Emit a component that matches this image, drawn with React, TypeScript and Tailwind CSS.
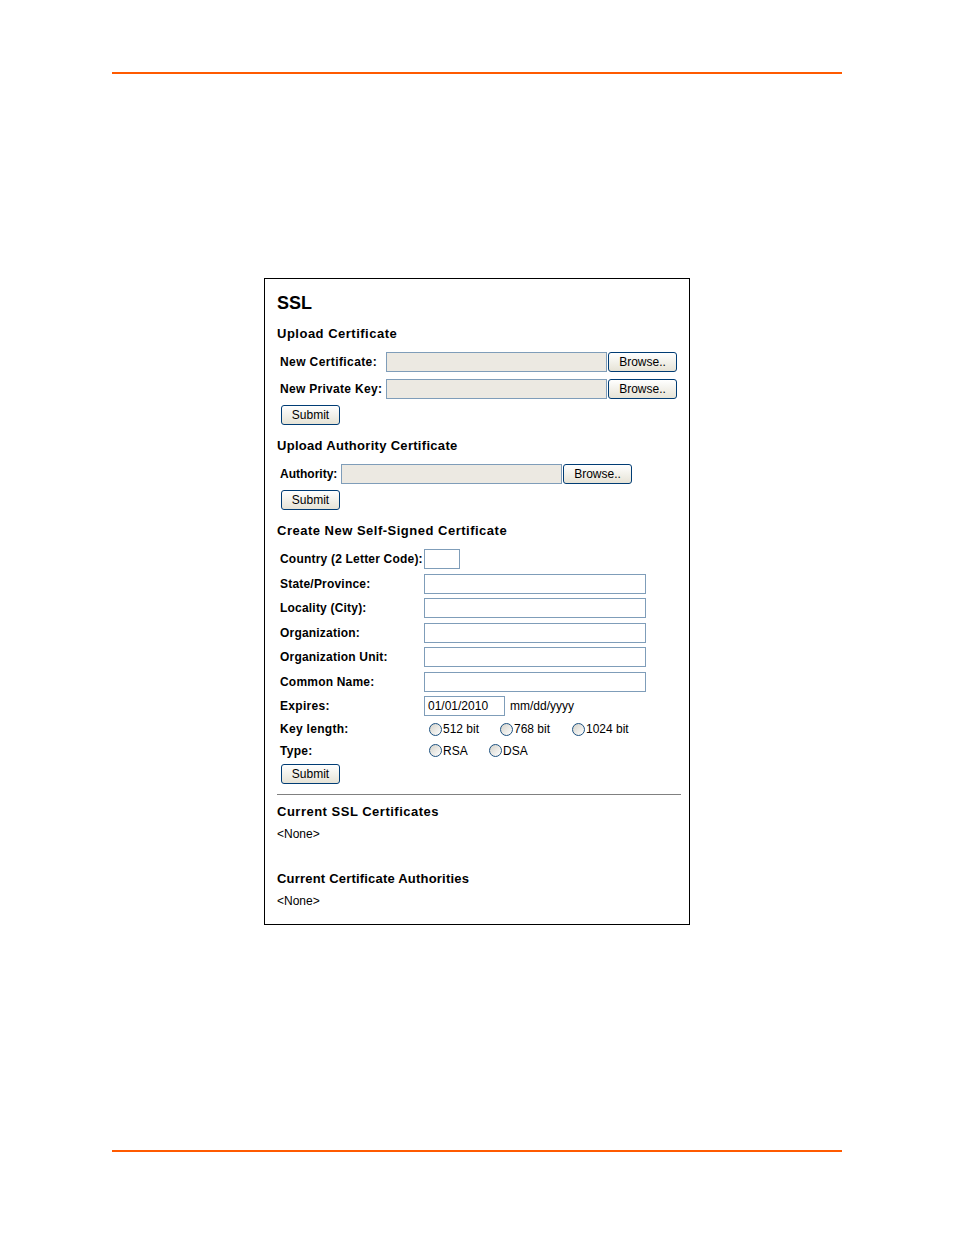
import React from 'react';

const font = { fontFamily: '"Liberation Sans", Arial, sans-serif' };

const Button: React.FC<{ label: string; width: string }> = ({ label, width }) => (
  <button
    type="button"
    className={`${width} h-[20px] shrink-0 rounded-[3px] border border-[#003c74] bg-gradient-to-b from-white to-[#e6e3d6] text-[12px] leading-none text-black`}
  >
    {label}
  </button>
);

const Radio: React.FC<{ label: string }> = ({ label }) => (
  <span className="flex items-center">
    <span className="w-[13px] h-[13px] rounded-full border border-[#1c5180] bg-gradient-to-br from-[#d4d2ca] to-white" />
    <span className="ml-[1px] text-[12px] text-black">{label}</span>
  </span>
);

const fields = [
  { label: 'Country (2 Letter Code):', width: 'w-[36px]' },
  { label: 'State/Province:', width: 'w-[222px]' },
  { label: 'Locality (City):', width: 'w-[222px]' },
  { label: 'Organization:', width: 'w-[222px]' },
  { label: 'Organization Unit:', width: 'w-[222px]' },
  { label: 'Common Name:', width: 'w-[222px]' },
];

export default function App() {
  return (
    <div className="w-[954px] h-[1235px] bg-white overflow-hidden" style={font}>
      <div className="mx-[112px] mt-[72px] h-[2px] bg-[#ff5a00]" />

      <div className="ml-[264px] mt-[204px] w-[426px] h-[647px] border border-black pl-[12px] pr-[8px] pt-[12px] text-black">
        <h1 className="text-[18px] leading-[24px] font-bold">SSL</h1>

        <h2 className="mt-[9px] pt-[2px] text-[13px] leading-[16px] font-bold tracking-[0.5px]">Upload Certificate</h2>
        <div className="ml-[3px] mt-[10px] flex flex-col gap-[7px]">
          <div className="flex h-[20px] items-center">
            <span className="w-[106px] text-[12px] font-bold tracking-[0.4px]">New Certificate:</span>
            <span className="w-[221px] h-[20px] border border-[#7f9db9] bg-[#ece9e2]" />
            <span className="ml-[1px] flex"><Button label="Browse.." width="w-[69px]" /></span>
          </div>
          <div className="flex h-[20px] items-center">
            <span className="w-[106px] text-[12px] font-bold tracking-[0.3px] whitespace-nowrap">New Private Key:</span>
            <span className="w-[221px] h-[20px] border border-[#7f9db9] bg-[#ece9e2]" />
            <span className="ml-[1px] flex"><Button label="Browse.." width="w-[69px]" /></span>
          </div>
        </div>
        <div className="ml-[4px] mt-[6px] flex">
          <Button label="Submit" width="w-[59px]" />
        </div>

        <h2 className="mt-[11px] pt-[2px] text-[13px] leading-[16px] font-bold tracking-[0.3px]">Upload Authority Certificate</h2>
        <div className="ml-[3px] mt-[10px] flex h-[20px] items-center">
          <span className="w-[61px] text-[12px] font-bold">Authority:</span>
          <span className="w-[221px] h-[20px] border border-[#7f9db9] bg-[#ece9e2]" />
          <span className="ml-[1px] flex"><Button label="Browse.." width="w-[69px]" /></span>
        </div>
        <div className="ml-[4px] mt-[6px] flex">
          <Button label="Submit" width="w-[59px]" />
        </div>

        <h2 className="mt-[11px] pt-[2px] text-[13px] leading-[16px] font-bold tracking-[0.5px]">Create New Self-Signed Certificate</h2>
        <div className="ml-[3px] mt-[10px]">
          {fields.map((f) => (
            <div key={f.label} className="flex h-[24.5px] items-start">
              <span className="w-[144px] h-[20px] flex items-center text-[12px] font-bold tracking-[0.2px] whitespace-nowrap">{f.label}</span>
              <span className={`${f.width} h-[20px] border border-[#7f9db9] bg-white`} />
            </div>
          ))}
          <div className="flex h-[20px] items-center">
            <span className="w-[144px] text-[12px] font-bold tracking-[0.3px]">Expires:</span>
            <span className="w-[81px] h-[20px] border border-[#7f9db9] bg-white pl-[3px] flex items-center text-[12px]">01/01/2010</span>
            <span className="ml-[5px] text-[12px]">mm/dd/yyyy</span>
          </div>
          <div className="mt-[2px] flex h-[22px] items-center">
            <span className="w-[149px] text-[12px] font-bold tracking-[0.3px]">Key length:</span>
            <span className="w-[71px]"><Radio label="512 bit" /></span>
            <span className="w-[72px]"><Radio label="768 bit" /></span>
            <Radio label="1024 bit" />
          </div>
          <div className="flex h-[21px] items-center">
            <span className="w-[149px] text-[12px] font-bold tracking-[0.3px]">Type:</span>
            <span className="w-[60px]"><Radio label="RSA" /></span>
            <Radio label="DSA" />
          </div>
        </div>
        <div className="ml-[4px] mt-[3px] flex">
          <Button label="Submit" width="w-[59px]" />
        </div>

        <div className="mt-[10px] h-[1px] bg-[#808080]" />

        <h2 className="mt-[7px] pt-[2px] text-[13px] leading-[16px] font-bold tracking-[0.5px]">Current SSL Certificates</h2>
        <p className="mt-[6px] pt-[1px] text-[12px] leading-[15px]">&lt;None&gt;</p>

        <h2 className="mt-[27px] pt-[2px] text-[13px] leading-[16px] font-bold tracking-[0.2px]">Current Certificate Authorities</h2>
        <p className="mt-[6px] pt-[1px] text-[12px] leading-[15px]">&lt;None&gt;</p>
      </div>

      <div className="mx-[112px] mt-[225px] h-[2px] bg-[#ff5a00]" />
    </div>
  );
}
